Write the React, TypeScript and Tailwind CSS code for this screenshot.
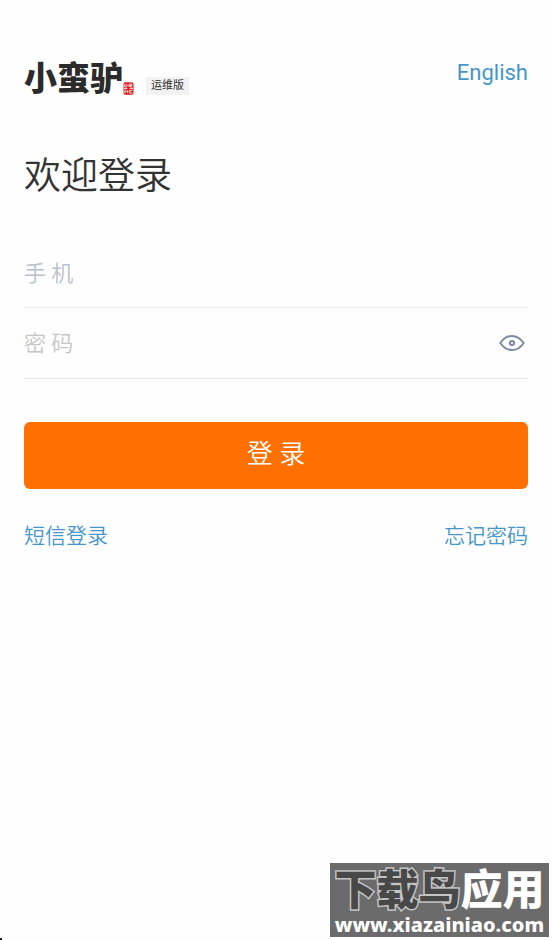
import { useState } from "react";

const eyeColor = "#7d8ba1";

function Seal() {
  return (
    <svg width="11" height="13" viewBox="0 0 11 13" aria-hidden="true">
      <rect x="0.5" y="0.3" width="10" height="12.4" rx="1.8" fill="#e0181c" />
      <g fill="none" stroke="#ffffff" strokeWidth="0.9">
        <path d="M1.8 2v3h1.4c1.3 0 1.3-3 0-3M6 5V2.4M6 2h2.8v1.600H6.600L9 5.200" />
        <path d="M1 6.600h3.400M6.400 6.300H10" />
        <path d="M1.800 11.200V8.400l1.500 1.400L4.800 8.400v2.800M9.400 8.300H6.800v2.700h2.600" />
      </g>
    </svg>
  );
}

function EyeIcon() {
  return (
    <svg
      width="26"
      height="18"
      viewBox="0 0 26 18"
      fill="none"
      stroke={eyeColor}
      strokeWidth="2"
      aria-hidden="true"
    >
      <path
        d="M1.300 9C4.600 4.200 8.400 1.900 13 1.900S21.400 4.200 24.700 9C21.400 13.800 17.600 16.100 13 16.100S4.600 13.800 1.300 9Z"
        strokeLinejoin="round"
      />
      <circle cx="13" cy="9" r="2.100" />
    </svg>
  );
}

function Header() {
  return (
    <header className="flex items-start justify-between">
      <div className="flex items-end">
        <span className="text-[33px] leading-10 font-black text-[#2b2b2b]">小蛮驴</span>
        <span className="pb-1">
          <Seal />
        </span>
        <span className="mb-1 ml-3 bg-[#f2f2f2] px-[5px] text-[11px] leading-[18px] text-[#333333]">
          运维版
        </span>
      </div>
      <a href="#english" className="text-[22px] leading-7 text-[#4596cb]">
        English
      </a>
    </header>
  );
}

function Watermark() {
  return (
    <div className="absolute right-[3px] bottom-[3px] w-[219px] bg-[#6b6b6b] pt-[6px] text-center whitespace-nowrap">
      <div className="text-[42px] leading-[44px] font-black text-white">
        <span className="text-[#484848] [-webkit-text-stroke:3px_#c4c4c4] [paint-order:stroke_fill]">
          下载鸟
        </span>
        <span>应用</span>
      </div>
      <div className="font-['Noto_Sans','Noto_Sans_CJK_SC',sans-serif] text-[20px] leading-6 font-extrabold text-white">
        www.xiazainiao.com
      </div>
    </div>
  );
}

export default function App() {
  const [showPassword, setShowPassword] = useState(false);

  return (
    <div className="relative min-h-screen bg-[#fefefe] px-6 pt-[59px] font-[Roboto,'Noto_Sans_CJK_SC',sans-serif]">
      <Header />

      <main>
        <h1 className="mt-[51px] text-[37px] leading-[54px] font-[350] text-[#333333]">
          欢迎登录
        </h1>

        <form className="mt-9" onSubmit={(e) => e.preventDefault()}>
          <div className="border-b border-[#ebebeb]">
            <input
              type="tel"
              aria-label="手机"
              placeholder="手 机"
              className="block h-[67px] w-full bg-transparent text-[22px] font-[350] outline-none placeholder:text-[#b9c1ca]"
            />
          </div>
          <div className="flex items-center border-b border-[#ebebeb]">
            <input
              type={showPassword ? "text" : "password"}
              aria-label="密码"
              placeholder="密 码"
              className="block h-[70px] min-w-0 flex-1 bg-transparent text-[22px] font-[350] outline-none placeholder:text-[#c6c6c6]"
            />
            <button
              type="button"
              aria-label="显示密码"
              className="px-[3px]"
              onClick={() => setShowPassword(!showPassword)}
            >
              <EyeIcon />
            </button>
          </div>

          <button
            type="submit"
            className="mt-[43px] h-[67px] w-full rounded-md bg-[#ff7000] pb-[2px] text-[26px] font-[350] text-white"
          >
            登 录
          </button>
        </form>

        <nav className="mt-8 flex justify-between text-[21px] leading-[30px] font-[350] text-[#4596cb]">
          <a href="#sms">短信登录</a>
          <a href="#forgot">忘记密码</a>
        </nav>
      </main>

      <Watermark />
      <div className="absolute bottom-0 left-0 h-[2px] w-[2px] bg-[#222222]" />
    </div>
  );
}
